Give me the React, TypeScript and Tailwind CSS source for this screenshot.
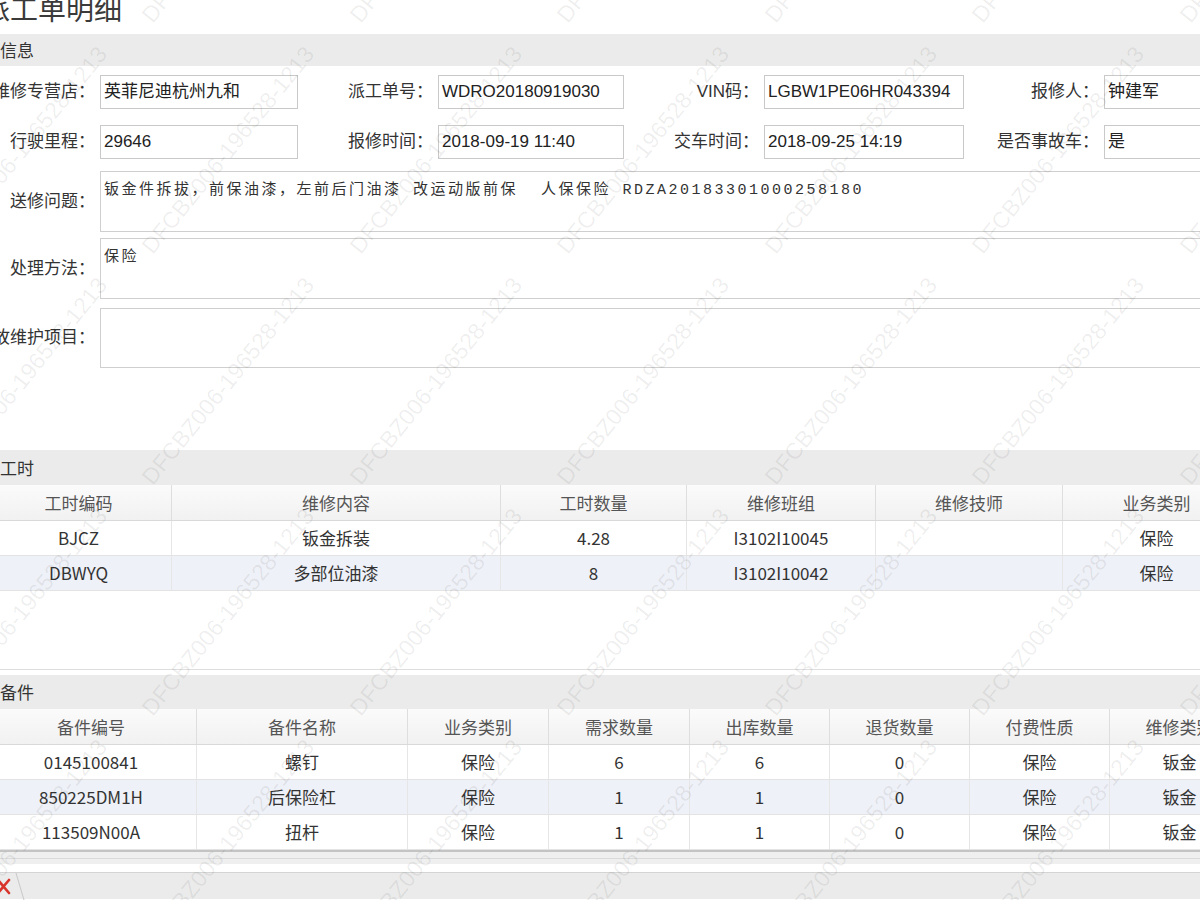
import React from "react";

const sans = "font-['Liberation_Sans','Noto_Sans_CJK_SC',sans-serif]";
const yahei = "font-['Noto_Sans_CJK_SC','Liberation_Sans',sans-serif]";

const formRows = [
  [
    ["维修专营店", "英菲尼迪杭州九和"],
    ["派工单号", "WDRO20180919030"],
    ["VIN码", "LGBW1PE06HR043394"],
    ["报修人", "钟建军"],
  ],
  [
    ["行驶里程", "29646"],
    ["报修时间", "2018-09-19 11:40"],
    ["交车时间", "2018-09-25 14:19"],
    ["是否事故车", "是"],
  ],
];

const areas = [
  { label: "送修问题", text: "钣金件拆拔，前保油漆，左前后门油漆 改运动版前保  人保保险 RDZA20183301000258180", h: "h-[61px]", mt: "mt-[12px]" },
  { label: "处理方法", text: "保险", h: "h-[61px]", mt: "mt-[6px]" },
  { label: "事故维护项目", text: "", h: "h-[60px]", mt: "mt-[9px]" },
];

const laborHead = ["工时编码", "维修内容", "工时数量", "维修班组", "维修技师", "业务类别"];
const laborRows = [
  ["BJCZ", "钣金拆装", "4.28", "I3102I10045", "", "保险"],
  ["DBWYQ", "多部位油漆", "8", "I3102I10042", "", "保险"],
];

const partsHead = ["备件编号", "备件名称", "业务类别", "需求数量", "出库数量", "退货数量", "付费性质", "维修类别"];
const partsRows = [
  ["0145100841", "螺钉", "保险", "6", "6", "0", "保险", "钣金"],
  ["850225DM1H", "后保险杠", "保险", "1", "1", "0", "保险", "钣金"],
  ["113509N00A", "扭杆", "保险", "1", "1", "0", "保险", "钣金"],
];

function SectionBar({ title, h }: { title: string; h: string }) {
  return (
    <div className={`${h} bg-[#ebebeb] flex items-center pl-[2px] text-[17px] text-[#333] ${yahei}`}>
      {title}
    </div>
  );
}

function Grid({ cols, head, rows }: { cols: string; head: string[]; rows: string[][] }) {
  return (
    <div className={`ml-[22px] text-[17px] ${yahei}`}>
      <div className={`grid ${cols} h-[36px] bg-linear-to-b from-[#fbfbfb] to-[#f1f1f1] border-b border-[#d9d9d9] text-[#555]`}>
        {head.map((h, i) => (
          <div key={i} className="flex items-center justify-center border-r border-[#dedede]">
            {h}
          </div>
        ))}
      </div>
      {rows.map((r, ri) => (
        <div
          key={ri}
          className={`grid ${cols} h-[35px] border-b border-[#e3e3e3] text-[#333] ${ri % 2 === 1 ? "bg-[#eef1f7]" : "bg-white"}`}
        >
          {r.map((c, ci) => (
            <div key={ci} className="flex items-center justify-center border-r border-[#e6e6e6]">
              {c}
            </div>
          ))}
        </div>
      ))}
    </div>
  );
}

function Watermarks() {
  const marks: { x: number; y: number }[] = [];
  for (let m = -1; m <= 3; m++) {
    for (let k = -2; k <= 5; k++) {
      marks.push({ x: 228 + 207.5 * k, y: 150 + 231 * m });
    }
  }
  return (
    <div className="pointer-events-none absolute inset-0 overflow-hidden">
      {marks.map((p, i) => (
        <span
          key={i}
          className="absolute whitespace-nowrap text-[23px] text-black/[0.07] font-['Liberation_Sans',sans-serif]"
          style={{ left: p.x, top: p.y, transform: "translate(-50%, -50%) rotate(-51deg)" }}
        >
          DFCBZ006-196528-1213
        </span>
      ))}
    </div>
  );
}

export default function App() {
  return (
    <div className="relative w-[1200px] h-[900px] overflow-hidden bg-white text-[#333]">
      <div className="-ml-[36px] w-[1300px]">
        <div className="h-[34px] flex items-start">
          <div className={`-mt-[9px] pl-[18px] text-[28px] leading-[34px] text-[#3a3a3a] ${yahei}`}>派工单明细</div>
        </div>

        <SectionBar title="基本信息" h="h-[32px]" />

        <div className={`pt-[9px] text-[17px] ${sans}`}>
          {formRows.map((row, ri) => (
            <div
              key={ri}
              className={`grid grid-cols-[136px_198px_140px_186px_140px_200px_140px_200px] h-[34px] ${ri === 1 ? "mt-[16px]" : ""}`}
            >
              {row.map(([label, value]) => (
                <React.Fragment key={label}>
                  <div className="flex items-center justify-end pr-[5px] whitespace-nowrap text-[#333]">
                    {label}：
                  </div>
                  <div className="flex items-center border border-[#c9c9c9] bg-white px-[3px] text-[#222] whitespace-nowrap overflow-hidden">
                    {value}
                  </div>
                </React.Fragment>
              ))}
            </div>
          ))}

          {areas.map((a) => (
            <div key={a.label} className={`grid grid-cols-[136px_1160px] ${a.h} ${a.mt}`}>
              <div className="flex items-center justify-end pr-[5px] whitespace-nowrap text-[#333]">{a.label}：</div>
              <div className="border border-[#cfcfcf] bg-white px-[3px] pt-[4px]">
                <span className="text-[15px] tracking-[2.5px] text-[#333] font-['Liberation_Mono','Noto_Sans_CJK_SC',monospace] whitespace-pre">
                  {a.text}
                </span>
              </div>
            </div>
          ))}
        </div>

        <div className="h-[82px]" />

        <SectionBar title="维修工时" h="h-[35px]" />
        <Grid cols="grid-cols-[186px_329px_186px_189px_187px_188px]" head={laborHead} rows={laborRows} />

        <div className="h-[79px] border-b border-[#dedede]" />
        <div className="h-[5px]" />

        <SectionBar title="维修备件" h="h-[34px]" />
        <Grid cols="grid-cols-[211px_211px_141px_141px_140px_140px_140px_140px]" head={partsHead} rows={partsRows} />

        <div className="h-[14px] border-t-2 border-[#c4c4c4] bg-[#efefef] flex flex-col justify-center">
          <div className="h-px bg-[#dadada]" />
        </div>
        <div className="h-[8px] bg-white" />
        <div className="h-[27px] bg-[#ebebeb] border-t border-[#d4d4d4] pl-[36px]">
          <svg width="40" height="27" viewBox="0 0 40 27">
            <path d="M-2 7 L9 20 M9 7 L-2 20" stroke="#d9342b" strokeWidth="2.6" strokeLinecap="round" />
            <path d="M16 0 L24 27" stroke="#c8c8c8" strokeWidth="1" />
          </svg>
        </div>
      </div>
      <Watermarks />
    </div>
  );
}
